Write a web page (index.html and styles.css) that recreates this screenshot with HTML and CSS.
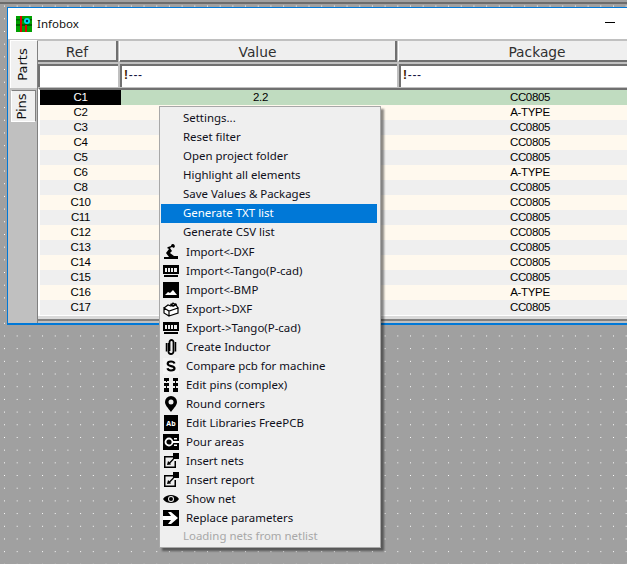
FILE: index.html
```html
<!DOCTYPE html>
<html lang="en">
<head>
<meta charset="utf-8">
<title>Infobox</title>
<link rel="stylesheet" href="styles.css">
</head>
<body>
<div class="top-edge"></div>
<div class="window">
  <header class="titlebar">
    <svg class="app-icon" viewBox="0 0 16 16" width="16" height="16"><rect width="16" height="16" fill="#00a000"/><rect x="0" y="3" width="16" height="1.500" fill="#006000"/><rect x="0" y="8" width="16" height="2" fill="#006000"/><rect x="4" y="0" width="2" height="16" fill="#e00000"/><rect x="9" y="9" width="2" height="7" fill="#e00000"/><circle cx="11" cy="5" r="3" fill="#00e0f0"/><circle cx="11" cy="5" r="1.200" fill="#003050"/></svg>
    <span class="title">Infobox</span>
    <span class="minimize"></span>
  </header>
  <div class="client">
    <nav class="tabs">
      <div class="tab tab-active"><span>Parts</span></div>
      <div class="tab tab-idle"><span>Pins</span></div>
    </nav>
    <div class="grid">
      <div class="head-row">
        <div class="head col-ref">Ref</div>
        <div class="head col-value">Value</div>
        <div class="head col-pkg">Package</div>
      </div>
      <div class="filter-row">
        <div class="filter col-ref"></div>
        <div class="filter col-value"><b>!</b>---</div>
        <div class="filter col-pkg"><b>!</b>---</div>
      </div>
      <div class="rows">
        <div class="row row-selected"><span class="c-ref">C1</span><span class="c-value">2.2</span><span class="c-pkg">CC0805</span></div>
        <div class="row row-b"><span class="c-ref">C2</span><span class="c-value"></span><span class="c-pkg">A-TYPE</span></div>
        <div class="row row-a"><span class="c-ref">C3</span><span class="c-value"></span><span class="c-pkg">CC0805</span></div>
        <div class="row row-b"><span class="c-ref">C4</span><span class="c-value"></span><span class="c-pkg">CC0805</span></div>
        <div class="row row-a"><span class="c-ref">C5</span><span class="c-value"></span><span class="c-pkg">CC0805</span></div>
        <div class="row row-b"><span class="c-ref">C6</span><span class="c-value"></span><span class="c-pkg">A-TYPE</span></div>
        <div class="row row-a"><span class="c-ref">C8</span><span class="c-value"></span><span class="c-pkg">CC0805</span></div>
        <div class="row row-b"><span class="c-ref">C10</span><span class="c-value"></span><span class="c-pkg">CC0805</span></div>
        <div class="row row-a"><span class="c-ref">C11</span><span class="c-value"></span><span class="c-pkg">CC0805</span></div>
        <div class="row row-b"><span class="c-ref">C12</span><span class="c-value"></span><span class="c-pkg">CC0805</span></div>
        <div class="row row-a"><span class="c-ref">C13</span><span class="c-value"></span><span class="c-pkg">CC0805</span></div>
        <div class="row row-b"><span class="c-ref">C14</span><span class="c-value"></span><span class="c-pkg">CC0805</span></div>
        <div class="row row-a"><span class="c-ref">C15</span><span class="c-value"></span><span class="c-pkg">CC0805</span></div>
        <div class="row row-b"><span class="c-ref">C16</span><span class="c-value"></span><span class="c-pkg">A-TYPE</span></div>
        <div class="row row-a"><span class="c-ref">C17</span><span class="c-value"></span><span class="c-pkg">CC0805</span></div>
      </div>
      <div class="grid-foot"></div>
    </div>
  </div>
</div>

<ul class="menu">
  <li class="item plain">Settings...</li>
  <li class="item plain">Reset filter</li>
  <li class="item plain">Open project folder</li>
  <li class="item plain">Highlight all elements</li>
  <li class="item plain">Save Values &amp; Packages</li>
  <li class="item plain active">Generate TXT list</li>
  <li class="item plain">Generate CSV list</li>
  <li class="item"><svg class="ico" viewBox="0 0 16 16"><path d="M9 0l3 2-1 2-2-1-2 1 2 3-2 2 4 3h4v3H1v-2h5L3 9l3-4-2-1 1-1 3-1z"/><circle cx="10" cy="1.500" r="1.500"/></svg><span>Import&lt;-DXF</span></li>
  <li class="item"><svg class="ico" viewBox="0 0 16 16"><path d="M0 2h16v9H0zM2 5v4h2V5zm3 0v4h2V5zm3 0v4h2V5zm3 0v4h3V5zM1 12h14v2H1z" fill-rule="evenodd"/></svg><span>Import&lt;-Tango(P-cad)</span></li>
  <li class="item"><svg class="ico" viewBox="0 0 16 16"><path d="M0 0h16v16H0z"/><path d="M2 13l3-3 2 1 3-3 4 5z" fill="#fff"/></svg><span>Import&lt;-BMP</span></li>
  <li class="item"><svg class="ico" viewBox="0 0 16 16"><path d="M1 7l5 3v5L1 12zM6 10l9-3v5l-9 3zM1 7l4-3 3 1 2-3 3 2 2 3-9 3z" fill="#fff" stroke="#000" stroke-width="1.200"/><path d="M8 2l2 2 3-2 1 2-4 2-3-2z"/></svg><span>Export-&gt;DXF</span></li>
  <li class="item"><svg class="ico" viewBox="0 0 16 16"><path d="M0 2h16v9H0zM2 5v4h2V5zm3 0v4h2V5zm3 0v4h2V5zm3 0v4h3V5zM1 12h14v2H1z" fill-rule="evenodd"/></svg><span>Export-&gt;Tango(P-cad)</span></li>
  <li class="item"><svg class="ico" viewBox="0 0 16 16"><path d="M5.500 4v8.500a2.500 2.500 0 0 0 5 0V3a2 2 0 0 0-4 0v9" fill="none" stroke="#000" stroke-width="1.800"/><path d="M3.500 4v8.500M12.500 3v9.500" stroke="#000" stroke-width="1.500"/></svg><span>Create Inductor</span></li>
  <li class="item"><svg class="ico" viewBox="0 0 16 16"><rect width="16" height="16" fill="#f4f4f4"/><path d="M11.500 5.500C11 4 9.500 3.500 8 3.500c-2 0-3.300 1-3.300 2.300 0 3 6.800 1.600 6.800 4.500 0 1.300-1.500 2.200-3.500 2.200-1.700 0-3.100-.7-3.500-2.200" fill="none" stroke="#000" stroke-width="2.200"/></svg><span>Compare pcb for machine</span></li>
  <li class="item"><svg class="ico" viewBox="0 0 16 16"><path d="M1 1h5v3H1zM3 4h1v1H3zM1 6h5v3H1zM3 9h1v2H3zM1 11h5v4H1zM10 1h5v3h-5zM12 4h1v2h-1zM10 6h5v3h-5zM12 9h1v2h-1zM10 11h5v4h-5z"/></svg><span>Edit pins (complex)</span></li>
  <li class="item"><svg class="ico" viewBox="0 0 16 16"><path fill-rule="evenodd" d="M8 0a6 6 0 0 1 6 6c0 3-3 6-6 10C5 12 2 9 2 6a6 6 0 0 1 6-6zm0 3.500a2.500 2.500 0 1 0 0 5 2.500 2.500 0 0 0 0-5z"/></svg><span>Round corners</span></li>
  <li class="item"><svg class="ico" viewBox="0 0 16 16"><path d="M1 0h14v16H1z"/><text class="ico-label" x="8" y="11">Ab</text></svg><span>Edit Libraries FreePCB</span></li>
  <li class="item"><svg class="ico" viewBox="0 0 16 16"><path d="M0 0h16v16H0z"/><circle cx="6" cy="8" r="3.500" fill="none" stroke="#fff" stroke-width="1.800"/><path d="M9 7h7v2H9zM11 4h3v1.500h-3zM11 10.500h3V12h-3z" fill="#fff"/></svg><span>Pour areas</span></li>
  <li class="item"><svg class="ico" viewBox="0 0 16 16"><path d="M1 3h9v1.500H2.500v9h9V8H13v7H1z"/><path d="M10 0h6v6h-6z"/><path d="M4 12l1-4 1.300 1.300L10 5.500l1 1-3.700 3.800L8 11.500z"/></svg><span>Insert nets</span></li>
  <li class="item"><svg class="ico" viewBox="0 0 16 16"><path d="M1 3h9v1.500H2.500v9h9V8H13v7H1z"/><path d="M10 0h6v6h-6z"/><path d="M4 12l1-4 1.300 1.300L10 5.500l1 1-3.700 3.800L8 11.500z"/></svg><span>Insert report</span></li>
  <li class="item"><svg class="ico" viewBox="0 0 16 16"><path fill-rule="evenodd" d="M0 8c2-3 5-4 8-4s6 1 8 4c-2 3-5 4-8 4s-6-1-8-4zm8-3a3 3 0 1 0 0 6 3 3 0 0 0 0-6z"/><circle cx="8" cy="8" r="2"/></svg><span>Show net</span></li>
  <li class="item"><svg class="ico" viewBox="0 0 16 16"><path d="M0 0h16v16H0z"/><path d="M0 6h8L5 2h3l7 6-7 6H5l3-4H0z" fill="#fff"/></svg><span>Replace parameters</span></li>
  <li class="item plain disabled">Loading nets from netlist</li>
</ul>
</body>
</html>
```
FILE: styles.css
```css
html, body { margin: 0; padding: 0; height: 100%; overflow: hidden; }
body {
  position: relative;
  background-color: #a0a0a0;
  background-image: radial-gradient(circle at 0.5px 0.5px, #fff 0.6px, transparent 0.7px);
  background-size: 12.7px 12.7px;
  background-position: 4px 5.6px;
  font-family: "Noto Sans", sans-serif;
}
.top-edge {
  height: 2px;
  margin-top: 2px;
  background: #6c6c6c;
}
.window {
  position: absolute;
  left: 7px;
  top: 7px;
  width: 620px;
  height: 318px;
  box-sizing: border-box;
  overflow: hidden;
  border-top: 1px solid #0078d7;
  border-left: 1px solid #0078d7;
  border-bottom: 2px solid #0078d7;
  background: #c0c0c0;
  display: flex;
  flex-direction: column;
}
.titlebar {
  height: 31px;
  flex: none;
  background: #fff;
  display: flex;
  align-items: center;
  padding: 0 0 0 8px;
  position: relative;
}
.app-icon { flex: none; }
.title {
  margin-left: 5px;
  font: 11.5px "Noto Sans", sans-serif;
  color: #101010;
}
.minimize {
  position: absolute;
  left: 597px;
  top: 14px;
  width: 10px;
  height: 1px;
  background: #000;
}
.client { flex: 1; display: flex; min-height: 0; }
.tabs {
  width: 29px;
  flex: none;
  display: flex;
  flex-direction: column;
  align-items: flex-start;
  padding: 1px 0 0 2px;
  box-sizing: border-box;
}
.tab {
  display: flex;
  align-items: center;
  justify-content: center;
  box-sizing: border-box;
  padding-right: 4px;
  font: 13px "DejaVu Sans", sans-serif;
  color: #101010;
  background: #f0f0f0;
}
.tab span { transform: rotate(-90deg); white-space: nowrap; }
.tab-active { width: 27px; height: 48px; border-left: 1px solid #fff; border-top: 1px solid #fff; }
.tab-idle { width: 25px; height: 32px; margin: 2px 0 0 1px; border: 1px solid #fff; border-right-color: #808080; border-top-color: #808080; }
.grid {
  flex: 1;
  min-width: 0;
  overflow: hidden;
  height: 282px;
  margin-top: 2px;
  border-left: 1px solid #808080;
  box-sizing: border-box;
  background: #c0c0c0;
}
.head-row, .filter-row { display: flex; }
.col-ref { width: 80px; }
.col-value { width: 277px; margin-left: 2px; }
.col-pkg { width: 278px; margin-left: 2px; }
.head {
  height: 21px;
  box-sizing: border-box;
  background: #efefef;
  border-right: 2px solid #707070;
  border-bottom: 2px solid #707070;
  box-shadow: -1px -1px 0 #fff;
  text-align: center;
  font: 13.8px/22px "DejaVu Sans", sans-serif;
  color: #303030;
  flex: none;
}
.filter-row { margin-top: 2px; }
.filter {
  height: 23px;
  box-sizing: border-box;
  background: #fff;
  border-top: 2px solid #707070;
  border-left: 2px solid #707070;
  padding-left: 2px;
  font: 12px/18px "Liberation Sans", sans-serif;
  letter-spacing: .7px;
  color: #101040;
  flex: none;
}
.filter b { color: #402000; }
.rows { margin-top: 1px; border-top: 2px solid #707070; border-left: 2px solid #fff; }
.row {
  height: 15px;
  display: flex;
  font: 11.5px/15px "Liberation Sans", sans-serif;
  letter-spacing: -.35px;
  text-align: center;
  color: #000;
}
.row-a { background: #efefef; }
.row-b { background: #fff9ee; }
.row-selected { background: #c0dcc0; }
.c-ref { width: 81px; flex: none; }
.row-selected .c-ref { background: #000; color: #fff; }
.c-value { width: 279px; flex: none; }
.c-pkg { width: 260px; flex: none; }
.grid-foot {
  height: 6px;
  box-sizing: border-box;
  background: #dadada;
  border-top: 1px solid #fff;
  border-bottom: 2px solid #808080;
}
.menu {
  position: absolute;
  left: 159px;
  top: 106px;
  width: 222px;
  height: 442px;
  box-sizing: border-box;
  margin: 0;
  padding: 2px 3px 0 1px;
  list-style: none;
  background: #efefef;
  border: 1px solid #a8a8a8;
  box-shadow: 3px 3px 2px rgba(0,0,0,.45);
  font-size: 11.45px;
  color: #10101a;
}
.item {
  height: 19px;
  display: flex;
  align-items: center;
  box-sizing: border-box;
  padding: 0 0 0 2px;
  white-space: nowrap;
}
.item.plain { padding: 0 0 2px 22px; }
.item.active { background: #0078d7; color: #fff; }
.item.disabled { color: #a8a8a8; }
.ico { width: 16px; height: 16px; flex: none; margin-right: 7px; }
.ico-label { font: 700 7px "Noto Sans", sans-serif; fill: #fff; text-anchor: middle; }
```
